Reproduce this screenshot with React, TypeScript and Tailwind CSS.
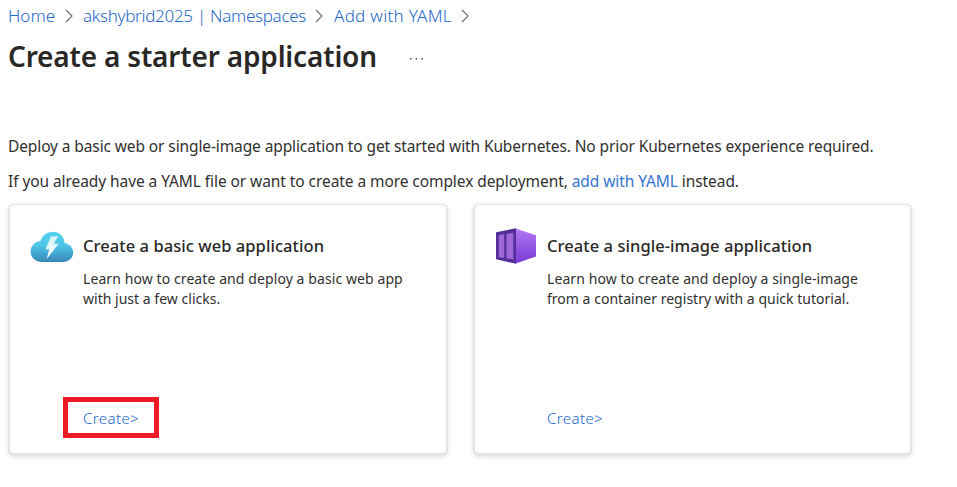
import type { ReactNode } from "react";

function Chevron() {
  return (
    <svg width="9" height="14" viewBox="0 0 9 14" fill="none" stroke="#6b6a69" strokeWidth="1.1">
      <path d="M1 1l6 6-6 6" />
    </svg>
  );
}

function CloudIcon() {
  return (
    <svg width="44" height="32" viewBox="0 0 44 32">
      <defs>
        <linearGradient id="cloud" x1="0" y1="0" x2="0" y2="1">
          <stop offset="0" stopColor="#55d2f3" />
          <stop offset="0.45" stopColor="#4fc4e6" />
          <stop offset="1" stopColor="#3787b8" />
        </linearGradient>
        <linearGradient id="bolt" x1="0" y1="0" x2="0" y2="1">
          <stop offset="0" stopColor="#d5f2fc" />
          <stop offset="1" stopColor="#fff" />
        </linearGradient>
      </defs>
      <path d="M11.5 31A10.500 10.500 0 0 1 .6 20.500 10.500 10.500 0 0 1 10.400 10 12.800 12.800 0 0 1 22.700 .7 12 12 0 0 1 34.600 12 10 10 0 0 1 43.300 21.600 9.800 9.800 0 0 1 33.300 31Z" fill="url(#cloud)" />
      <path d="M21 5.300H28.300L23.600 12.800H28.600L16.800 28L19.200 18.200H15.500Z" fill="url(#bolt)" />
    </svg>
  );
}

function ContainerIcon() {
  return (
    <svg width="42" height="36" viewBox="0 0 42 36">
      <defs>
        <linearGradient id="side" x1="0" y1="0" x2="0" y2="1">
          <stop offset="0" stopColor="#b47af3" />
          <stop offset="1" stopColor="#7838d4" />
        </linearGradient>
      </defs>
      <path d="M20 .3L41 7.300V28.600L20 35.800Z" fill="url(#side)" />
      <path d="M1 4.200L21 .2V35.800L1 31.200Z" fill="#552f99" />
      <path d="M3.800 7.200L9.200 6.300V30L3.800 29Z" fill="#a067dc" />
      <path d="M11.500 6L18.300 4.700V31.500L11.500 30.300Z" fill="#a067dc" />
    </svg>
  );
}

interface CardProps {
  icon: ReactNode;
  title: string;
  lines: { text: string; className: string }[];
  highlighted?: boolean;
  className: string;
}

function Card({ icon, title, lines, highlighted, className }: CardProps) {
  return (
    <section className={`flex h-[248px] rounded-[4px] bg-white shadow-[0_1px_1px_2px_#e4e4e4,0_2px_5px_2px_rgba(0,0,0,0.12)] ${className}`}>
      <div className="w-[53px] shrink-0 pt-[23px]">{icon}</div>
      <div className="flex flex-col items-start">
        <h2 className="mt-[29px] text-[16.5px] leading-6 font-medium tracking-[0.06px] text-[#292827]">{title}</h2>
        <div className="mt-[11px] text-[14px] leading-5 text-[#323130]">
          {lines.map((l) => (
            <p key={l.text} className={`w-fit ${l.className}`}>{l.text}</p>
          ))}
        </div>
        <a
          className={`mt-[88px] -ml-5 flex h-[41px] w-[96px] items-center border-[5px] pt-px pl-[15px] text-[15px] font-light tracking-[0.4px] text-[#2468c8] ${
            highlighted ? "border-[#ed1c24]" : "border-transparent"
          }`}
        >
          Create&gt;
        </a>
      </div>
    </section>
  );
}

export default function App() {
  return (
    <main className="h-[487px] w-[957px] overflow-hidden bg-white pl-[8px] font-['Noto_Sans',sans-serif] whitespace-nowrap text-[#323130]">
      <nav className="flex h-8 items-center text-[17px] font-light text-[#2468c8]">
        <a className="w-[57px] tracking-[0.05px]">Home</a>
        <Chevron />
        <a className="ml-[9px] w-[232px] tracking-[-0.28px]">akshybrid2025 | Namespaces</a>
        <Chevron />
        <a className="ml-[10px] w-[127px] tracking-[0.3px]">Add with YAML</a>
        <Chevron />
      </nav>
      <header className="flex h-12 items-center">
        <h1 className="w-[401px] text-[28px] leading-[48px] font-semibold tracking-[-0.18px] text-[#292827]">Create a starter application</h1>
        <svg className="mt-[5px]" width="16" height="4" viewBox="0 0 16 4" fill="#4a4948">
          <path d="M1 1h1.500v1.500H1zM6.700 1h1.500v1.500H6.700zM12.500 1h1.500v1.500h-1.500z" />
        </svg>
      </header>
      <p className="mt-[54px] text-[15.5px] leading-6 tracking-[-0.11px]">
        Deploy a basic web or single-image application to get started with Kubernetes. No prior Kubernetes experience required.
      </p>
      <p className="mt-[11px] text-[15.5px] leading-6 tracking-[-0.075px]">
        If you already have a YAML file or want to create a more complex deployment, <a className="text-[#3474cf]">add with YAML</a> instead.
      </p>
      <div className="mt-[12px] ml-[2px] flex gap-[29px]">
        <Card
          className="w-[436px] pl-[20px]"
          icon={<div className="pt-[3px]"><CloudIcon /></div>}
          title="Create a basic web application"
          lines={[
            { text: "Learn how to create and deploy a basic web app", className: "tracking-[0.09px]" },
            { text: "with just a few clicks.", className: "tracking-[0.02px]" },
          ]}
          highlighted
        />
        <Card
          className="w-[435px] pl-[19px]"
          icon={<div className="ml-px"><ContainerIcon /></div>}
          title="Create a single-image application"
          lines={[
            { text: "Learn how to create and deploy a single-image", className: "tracking-[0.09px]" },
            { text: "from a container registry with a quick tutorial.", className: "tracking-[0.02px]" },
          ]}
        />
      </div>
    </main>
  );
}
